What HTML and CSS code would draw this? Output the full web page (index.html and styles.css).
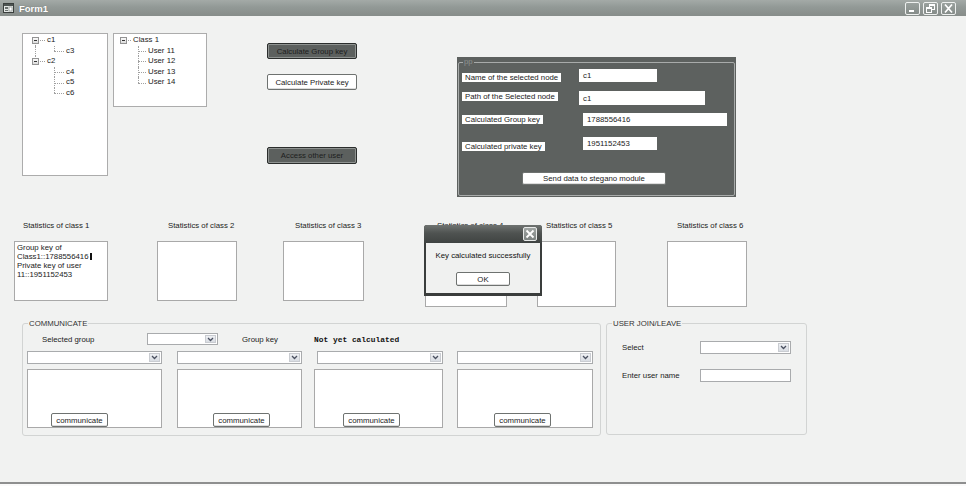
FILE: index.html
```html
<!DOCTYPE html>
<html>
<head>
<meta charset="utf-8">
<title>Form1</title>
<link rel="stylesheet" href="styles.css">
</head>
<body>
<div class="window">
  <div class="titlebar">
    <svg class="appicon" width="11" height="10" viewBox="0 0 11 10"><rect x="0.5" y="0.5" width="10" height="9" fill="#e4e8e6" stroke="#3a3f3d"/><rect x="1" y="1" width="9" height="2" fill="#4d5452"/><rect x="2" y="4" width="3" height="2" fill="#6a716e"/><rect x="2" y="7" width="3" height="1" fill="#6a716e"/><rect x="6" y="4" width="3" height="4" fill="#ffffff" stroke="#7a807d" stroke-width="0.6"/></svg>
    <span class="title">Form1</span>
    <div class="wbtns">
      <span class="wbtn"><svg width="13" height="11" viewBox="0 0 13 11"><rect x="3" y="7" width="5" height="2" fill="#fff"/></svg></span>
      <span class="wbtn"><svg width="13" height="11" viewBox="0 0 13 11"><rect x="5.5" y="1.5" width="5" height="5" fill="none" stroke="#fff"/><rect x="5" y="1" width="6" height="2" fill="#fff"/><rect x="2.5" y="4.5" width="5" height="5" fill="#8d9491" stroke="#fff"/><rect x="2" y="4" width="6" height="2" fill="#fff"/></svg></span>
      <span class="wbtn"><svg width="13" height="11" viewBox="0 0 13 11"><path d="M3 1.5 L10 9.5 M10 1.5 L3 9.5" stroke="#fff" stroke-width="1.7"/></svg></span>
    </div>
  </div>

  <div class="client">
    <div class="top">
      <div class="tree t1">
        <div class="trow"><span class="cell vb h"><i class="exp"></i></span><span class="lbl">c1</span></div>
        <div class="trow"><span class="cell v"></span><span class="cell vt h"></span><span class="lbl">c3</span></div>
        <div class="trow"><span class="cell vt h"><i class="exp"></i></span><span class="lbl">c2</span></div>
        <div class="trow"><span class="cell"></span><span class="cell v h"></span><span class="lbl">c4</span></div>
        <div class="trow"><span class="cell"></span><span class="cell v h"></span><span class="lbl">c5</span></div>
        <div class="trow"><span class="cell"></span><span class="cell vt h"></span><span class="lbl">c6</span></div>
      </div>
      <div class="tree t2">
        <div class="trow"><span class="cell h"><i class="exp"></i></span><span class="lbl">Class 1</span></div>
        <div class="trow"><span class="cell"></span><span class="cell v h"></span><span class="lbl">User 11</span></div>
        <div class="trow"><span class="cell"></span><span class="cell v h"></span><span class="lbl">User 12</span></div>
        <div class="trow"><span class="cell"></span><span class="cell v h"></span><span class="lbl">User 13</span></div>
        <div class="trow"><span class="cell"></span><span class="cell vt h"></span><span class="lbl">User 14</span></div>
      </div>
      <div class="btncol">
        <div class="btn dark b1">Calculate Group key</div>
        <div class="btn light b2">Calculate Private key</div>
        <div class="btn dark b3">Access other user</div>
      </div>
      <div class="panel">
        <div class="pframe">
          <span class="plegend">pp</span>
          <div class="prow r1"><span class="plcell"><span class="plabel">Name of the selected node</span></span><span class="ptext">c1</span></div>
          <div class="prow r2"><span class="plcell"><span class="plabel">Path of the Selected node</span></span><span class="ptext">c1</span></div>
          <div class="prow r3"><span class="plcell"><span class="plabel">Calculated Group key</span></span><span class="ptext">1788556416</span></div>
          <div class="prow r4"><span class="plcell"><span class="plabel">Calculated private key</span></span><span class="ptext">1951152453</span></div>
          <div class="sendrow"><span class="btn light send">Send data to stegano module</span></div>
        </div>
      </div>
    </div>

    <div class="stats">
      <div class="stat s1"><div class="slabel">Statistics of class 1</div><div class="sbox">Group key of<br>Class1::1788556416<span class="caret"></span><br>Private key of user<br>11::1951152453</div></div>
      <div class="stat s2"><div class="slabel">Statistics of class 2</div><div class="sbox"></div></div>
      <div class="stat s3"><div class="slabel">Statistics of class 3</div><div class="sbox"></div></div>
      <div class="stat s4"><div class="slabel">Statistics of class 4</div><div class="sbox"></div></div>
      <div class="stat s5"><div class="slabel">Statistics of class 5</div><div class="sbox"></div></div>
      <div class="stat s6"><div class="slabel">Statistics of class 6</div><div class="sbox"></div></div>
    </div>

    <div class="groups">
      <div class="gbox comm">
        <span class="glegend">COMMUNICATE</span>
        <div class="crow1">
          <span class="ctext sg">Selected group</span>
          <span class="combo cg"><span class="drop"><svg width="7" height="5" viewBox="0 0 7 5"><path d="M1 1 L3.5 3.5 L6 1" fill="none" stroke="#4a5060" stroke-width="1.3"/></svg></span></span>
          <span class="ctext gk">Group key</span>
          <span class="nyc">Not yet calculated</span>
        </div>
        <div class="crow2">
          <span class="combo k1"><span class="drop"><svg width="7" height="5" viewBox="0 0 7 5"><path d="M1 1 L3.5 3.5 L6 1" fill="none" stroke="#4a5060" stroke-width="1.3"/></svg></span></span>
          <span class="combo k2"><span class="drop"><svg width="7" height="5" viewBox="0 0 7 5"><path d="M1 1 L3.5 3.5 L6 1" fill="none" stroke="#4a5060" stroke-width="1.3"/></svg></span></span>
          <span class="combo k3"><span class="drop"><svg width="7" height="5" viewBox="0 0 7 5"><path d="M1 1 L3.5 3.5 L6 1" fill="none" stroke="#4a5060" stroke-width="1.3"/></svg></span></span>
          <span class="combo k4"><span class="drop"><svg width="7" height="5" viewBox="0 0 7 5"><path d="M1 1 L3.5 3.5 L6 1" fill="none" stroke="#4a5060" stroke-width="1.3"/></svg></span></span>
        </div>
        <div class="crow3">
          <div class="tarea a1"><span class="btn light cbtn">communicate</span></div>
          <div class="tarea a2"><span class="btn light cbtn">communicate</span></div>
          <div class="tarea a3"><span class="btn light cbtn">communicate</span></div>
          <div class="tarea a4"><span class="btn light cbtn">communicate</span></div>
        </div>
      </div>
      <div class="gbox user">
        <span class="glegend">USER JOIN/LEAVE</span>
        <div class="urow u1">
          <span class="ulabel">Select</span>
          <span class="combo uc"><span class="drop"><svg width="7" height="5" viewBox="0 0 7 5"><path d="M1 1 L3.5 3.5 L6 1" fill="none" stroke="#4a5060" stroke-width="1.3"/></svg></span></span>
        </div>
        <div class="urow u2">
          <span class="ulabel">Enter user name</span>
          <span class="utext"></span>
        </div>
      </div>
    </div>
  </div>
  <div class="bottomedge"></div>

  <div class="dialog">
    <div class="dtitle"><span class="dclose"><svg width="12" height="12" viewBox="0 0 12 12"><path d="M2.5 2.5 L9.5 9.5 M9.5 2.5 L2.5 9.5" stroke="#fff" stroke-width="1.8"/></svg></span></div>
    <div class="dbody">
      <div class="dmsg">Key calculated successfully</div>
      <div class="btn light dok">OK</div>
    </div>
  </div>
</div>
</body>
</html>
```
FILE: styles.css
```css
html, body {
  margin: 0;
  padding: 0;
  background: #f1f2f1;
}
body {
  font-family: "Liberation Sans", Arial, sans-serif;
  font-size: 7.8px;
  color: #222;
}
.window {
  position: relative;
  width: 966px;
  height: 486px;
  display: flex;
  flex-direction: column;
  background: #f1f2f1;
  overflow: hidden;
}

/* title bar */
.titlebar {
  height: 16px;
  flex: none;
  display: flex;
  align-items: center;
  background: linear-gradient(#a4aaa7, #929996 45%, #878d8a);
}
.appicon { margin-left: 3px; flex: none; }
.title {
  margin-left: 5px;
  color: #fff;
  font-weight: bold;
  font-size: 9.5px;
  text-shadow: 0 0 1px #6a706d;
}
.wbtns {
  margin-left: auto;
  margin-right: 10px;
  display: flex;
  gap: 3px;
}
.wbtn {
  width: 15px;
  height: 13px;
  box-sizing: border-box;
  border: 1px solid #eef0ef;
  border-radius: 2px;
  background: linear-gradient(#9aa19e, #858c89);
  display: flex;
  align-items: center;
  justify-content: center;
}

/* client */
.client {
  flex: 1;
  display: flex;
  flex-direction: column;
}
.top {
  display: flex;
  align-items: flex-start;
  padding: 17px 0 0 22px;
}

/* trees */
.tree {
  box-sizing: border-box;
  background: #fff;
  border: 1px solid #acacac;
  padding-top: 1px;
}
.t1 { width: 86px; height: 143px; padding-left: 3px; --c: 9px; }
.t2 { width: 94px; height: 74px; margin-left: 5px; padding-left: 2px; --c: 7px; }
.trow {
  display: flex;
  height: 10.6px;
  line-height: 10.6px;
  white-space: nowrap;
}
.cell {
  position: relative;
  flex: none;
  height: 100%;
}
.t1 .cell { width: 19px; }
.t2 .cell { width: 15px; }
.cell.v::before, .cell.vt::before, .cell.vb::before {
  content: "";
  position: absolute;
  left: var(--c);
  border-left: 1px dotted #a0a0a0;
}
.cell.v::before { top: 0; bottom: 0; }
.cell.vt::before { top: 0; height: 50%; }
.cell.vb::before { top: 50%; bottom: 0; }
.cell.h::after {
  content: "";
  position: absolute;
  left: var(--c);
  right: 0;
  top: 50%;
  border-top: 1px dotted #a0a0a0;
}
.exp {
  position: absolute;
  z-index: 1;
  left: calc(var(--c) - 3px);
  top: calc(50% - 3px);
  width: 7px;
  height: 7px;
  box-sizing: border-box;
  border: 1px solid #939393;
  background: linear-gradient(#fafafa, #dcdcdc);
}
.exp::after {
  content: "";
  position: absolute;
  left: 1px;
  top: 2px;
  width: 3px;
  height: 1px;
  background: #333;
}
.lbl { margin-left: 2px; color: #222; }

/* buttons */
.btn {
  box-sizing: border-box;
  display: flex;
  align-items: center;
  justify-content: center;
  white-space: nowrap;
  border-radius: 2px;
}
.btn.dark {
  background: #5c605e;
  border: 1px solid #2b2e2d;
  box-shadow: inset 0 0 0 1px #8f9391;
  color: #1c1e1d;
}
.btn.light {
  background: #fff;
  border: 1px solid #6e7270;
  box-shadow: inset 0 -1px 0 #dcdcdc;
  color: #222;
}
.btncol {
  margin: 10px 0 0 60px;
  width: 90px;
  display: flex;
  flex-direction: column;
}
.b1 { height: 16px; }
.b2 { height: 16px; margin-top: 15px; }
.b3 { height: 17px; margin-top: 57px; }

/* gray panel */
.panel {
  margin: 24px 0 0 100px;
  width: 279px;
  height: 140px;
  box-sizing: border-box;
  background: #5d615f;
  padding: 5px 1px 1px 1px;
}
.pframe {
  box-sizing: border-box;
  height: 100%;
  border: 1px solid #a8abaa;
  border-radius: 2px;
}
.plegend {
  display: block;
  width: max-content;
  margin: -6px 0 0 4px;
  padding: 0 1px;
  line-height: 10px;
  background: #5d615f;
  color: #8e9290;
}
.prow {
  display: flex;
  align-items: flex-start;
  padding-left: 3px;
}
.plcell { width: 117px; flex: none; }
.plabel {
  display: inline-block;
  background: #fff;
  padding: 0 3px;
  height: 9px;
  line-height: 9px;
  color: #222;
}
.ptext {
  box-sizing: border-box;
  background: #fff;
  padding-left: 4px;
  display: flex;
  align-items: center;
  color: #222;
}
.r1 { margin-top: 2px; }
.r1 .plabel { margin-top: 4px; }
.r1 .ptext { width: 78px; height: 13px; }
.r2 { margin-top: 9px; }
.r2 .plabel { margin-top: 1px; }
.r2 .ptext { width: 126px; height: 14px; }
.r3 { margin-top: 8px; }
.r3 .plabel { margin-top: 2px; }
.r3 .ptext { width: 144px; height: 13px; margin-left: 4px; }
.r4 { margin-top: 11px; }
.r4 .plabel { margin-top: 5px; }
.r4 .ptext { width: 74px; height: 13px; margin-left: 4px; }
.sendrow { margin-top: 21px; padding-left: 63px; display: flex; }
.send { width: 144px; height: 13px; border-color: #5a5d5c; }

/* statistics */
.stats {
  display: flex;
  align-items: flex-start;
  padding-top: 24px;
}
.slabel { line-height: 10px; white-space: nowrap; color: #222; }
.sbox {
  box-sizing: border-box;
  margin-top: 10px;
  background: #fff;
  border: 1px solid #a9a9a9;
  padding: 1px 2px;
  line-height: 9px;
  color: #222;
}
.caret {
  display: inline-block;
  width: 2px;
  height: 7px;
  margin-left: 1px;
  background: #111;
  vertical-align: -1px;
}
.s1 { margin-left: 14px; }
.s1 .slabel { padding-left: 9px; }
.s1 .sbox { width: 94px; height: 60px; }
.s2 { margin-left: 49px; }
.s2 .slabel { padding-left: 11px; }
.s2 .sbox { width: 80px; height: 60px; }
.s3 { margin-left: 46px; }
.s3 .slabel { padding-left: 12px; }
.s3 .sbox { width: 81px; height: 60px; }
.s4 { margin-left: 61px; }
.s4 .slabel { padding-left: 12px; }
.s4 .sbox { width: 82px; height: 66px; }
.s5 { margin-left: 30px; }
.s5 .slabel { padding-left: 9px; }
.s5 .sbox { width: 79px; height: 66px; }
.s6 { margin-left: 51px; }
.s6 .slabel { padding-left: 10px; }
.s6 .sbox { width: 80px; height: 66px; }

/* group boxes */
.groups {
  display: flex;
  align-items: flex-start;
  gap: 5px;
  margin-top: 16px;
  padding-left: 22px;
}
.gbox {
  box-sizing: border-box;
  border: 1px solid #d2d4d3;
  border-radius: 3px;
}
.comm { width: 579px; height: 113px; }
.user { width: 201px; height: 112px; }
.glegend {
  display: block;
  width: max-content;
  margin: -6px 0 0 5px;
  padding: 0 1px;
  line-height: 11px;
  background: #f1f2f1;
  color: #333;
}
.crow1 {
  display: flex;
  align-items: center;
  height: 12px;
  margin-top: 4px;
}
.ctext { white-space: nowrap; }
.sg { width: 105px; margin-left: 19px; flex: none; }
.cg { width: 71px; height: 12px; }
.gk { width: 72px; margin-left: 24px; flex: none; }
.nyc {
  font-family: "Liberation Mono", "Courier New", monospace;
  font-weight: bold;
  font-size: 7.9px;
  color: #111;
  white-space: nowrap;
}
.combo {
  box-sizing: border-box;
  display: flex;
  justify-content: flex-end;
  background: #fff;
  border: 1px solid #a9abad;
  padding: 1px;
  flex: none;
}
.drop {
  width: 11px;
  box-sizing: border-box;
  background: linear-gradient(#eef0f3, #d9dde3);
  border: 1px solid #c9ccd1;
  display: flex;
  align-items: center;
  justify-content: center;
}
.crow2 {
  display: flex;
  margin-top: 6px;
}
.crow2 .combo { height: 13px; }
.k1 { width: 135px; margin-left: 4px; }
.k2 { width: 125px; margin-left: 15px; }
.k3 { width: 126px; margin-left: 15px; }
.k4 { width: 136px; margin-left: 14px; }
.crow3 {
  display: flex;
  margin-top: 5px;
}
.tarea {
  box-sizing: border-box;
  height: 59px;
  background: #fff;
  border: 1px solid #a9a9a9;
  display: flex;
  align-items: flex-end;
  padding-bottom: 0;
}
.cbtn { width: 57px; height: 14px; border-color: #6b6e6d; }
.a1 { width: 135px; margin-left: 4px; padding-left: 23px; }
.a2 { width: 125px; margin-left: 15px; padding-left: 35px; }
.a3 { width: 129px; margin-left: 12px; padding-left: 28px; }
.a4 { width: 136px; margin-left: 14px; padding-left: 36px; }

.urow {
  display: flex;
  align-items: center;
  padding-left: 15px;
}
.ulabel { width: 78px; flex: none; white-space: nowrap; }
.u1 { margin-top: 12px; }
.uc { width: 91px; height: 13px; }
.u2 { margin-top: 15px; }
.utext {
  box-sizing: border-box;
  width: 91px;
  height: 13px;
  background: #fff;
  border: 1px solid #a9abad;
}

.bottomedge {
  flex: none;
  height: 4px;
  box-sizing: border-box;
  border-top: 2px solid #8e8f8f;
  background: #fafafa;
}

/* message box */
.dialog {
  position: absolute;
  left: 424px;
  top: 225px;
  width: 118px;
  height: 71px;
  box-sizing: border-box;
  background: #3a3d3c;
  padding: 0 2px 3px 2px;
  border-radius: 3px 3px 0 0;
  display: flex;
  flex-direction: column;
  z-index: 5;
}
.dtitle {
  height: 18px;
  flex: none;
  display: flex;
  align-items: center;
  justify-content: flex-end;
  padding-right: 3px;
  background: linear-gradient(#6f7371, #4f5351 45%, #3f4342);
  margin: 0 -2px;
  padding-right: 5px;
  border-radius: 3px 3px 0 0;
}
.dclose {
  width: 14px;
  height: 14px;
  box-sizing: border-box;
  border: 1px solid #e8eae9;
  border-radius: 2px;
  background: linear-gradient(#a0a5a3, #7d8381);
  display: flex;
  align-items: center;
  justify-content: center;
}
.dbody {
  flex: 1;
  background: #f0f1f0;
  display: flex;
  flex-direction: column;
  align-items: center;
}
.dmsg {
  margin-top: 8px;
  line-height: 10px;
  white-space: nowrap;
  color: #111;
}
.dok {
  margin-top: 11px;
  width: 54px;
  height: 14px;
  border-color: #5f6261;
}
```
